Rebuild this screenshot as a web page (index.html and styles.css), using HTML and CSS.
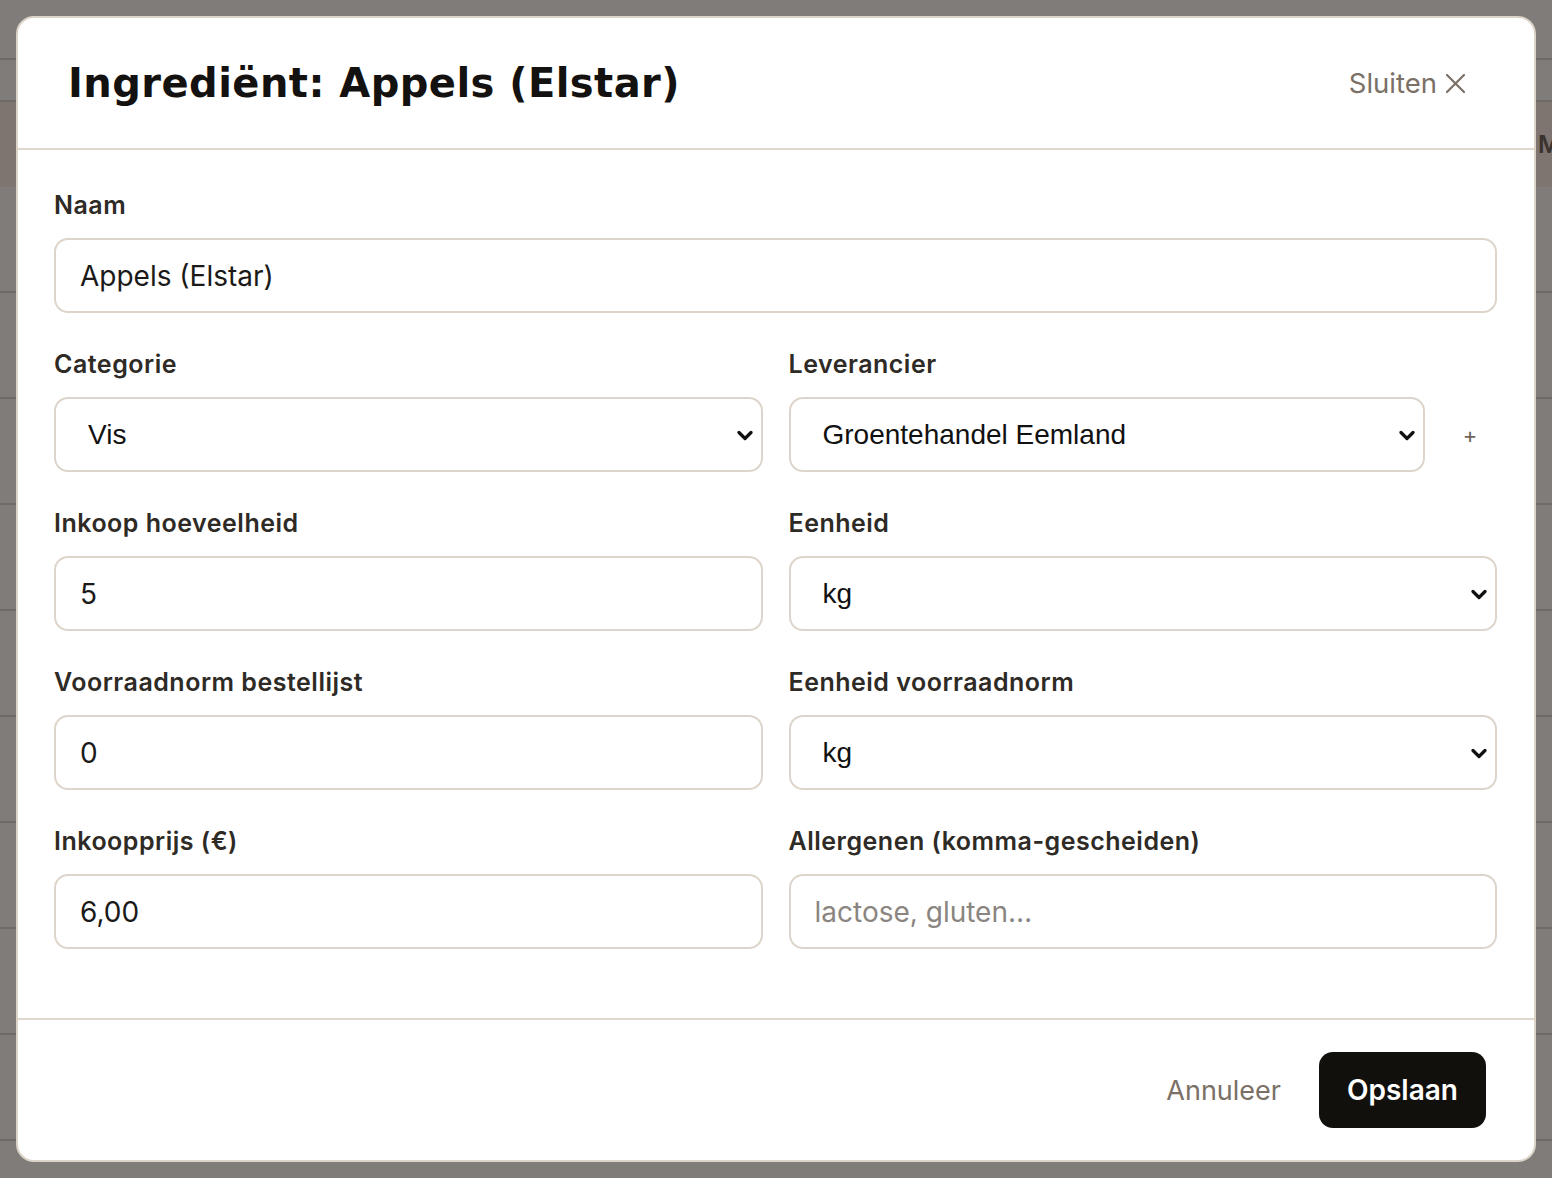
FILE: index.html
```html
<!DOCTYPE html>
<html lang="nl">
<head>
<meta charset="utf-8">
<title>Ingrediënt: Appels (Elstar)</title>
<link rel="stylesheet" href="styles.css">
</head>
<body>
<div class="page">
  <div class="topbar"></div>
  <div class="subbar"></div>
  <div class="thead"><span class="th">M</span></div>
  <div class="trow"></div>
  <div class="trow"></div>
  <div class="trow"></div>
  <div class="trow"></div>
  <div class="trow"></div>
  <div class="trow"></div>
  <div class="trow"></div>
  <div class="trow"></div>
  <div class="trow"></div>
</div>

<div class="modal">
  <header class="modal-header">
    <h1 class="modal-title">Ingrediënt: Appels (Elstar)</h1>
    <button class="close-btn" type="button">Sluiten
      <svg class="close-icon" width="21" height="21" viewBox="0 0 21 21" aria-hidden="true">
        <path d="M2 2 L19 19 M19 2 L2 19" stroke="currentColor" stroke-width="2.2" fill="none" stroke-linecap="round"/>
      </svg>
    </button>
  </header>

  <div class="modal-body">
    <div class="form-grid">
      <div class="field span-2">
        <label class="label">Naam</label>
        <input class="control" type="text" value="Appels (Elstar)">
      </div>

      <div class="field">
        <label class="label">Categorie</label>
        <div class="select-wrap">
          <select class="control select">
            <option>Vis</option>
          </select>
          <svg class="chev" width="16" height="11" viewBox="0 0 16 11" aria-hidden="true"><polyline points="2,2.5 8,8.5 14,2.5" fill="none" stroke="#111" stroke-width="3.2" stroke-linecap="round" stroke-linejoin="round"/></svg>
        </div>
      </div>
      <div class="field">
        <label class="label">Leverancier</label>
        <div class="with-add">
          <div class="select-wrap">
            <select class="control select">
              <option>Groentehandel Eemland</option>
            </select>
            <svg class="chev" width="16" height="11" viewBox="0 0 16 11" aria-hidden="true"><polyline points="2,2.5 8,8.5 14,2.5" fill="none" stroke="#111" stroke-width="3.2" stroke-linecap="round" stroke-linejoin="round"/></svg>
          </div>
          <button class="add-btn" type="button">+</button>
        </div>
      </div>

      <div class="field">
        <label class="label">Inkoop hoeveelheid</label>
        <input class="control" type="text" value="5">
      </div>
      <div class="field">
        <label class="label">Eenheid</label>
        <div class="select-wrap">
          <select class="control select">
            <option>kg</option>
          </select>
          <svg class="chev" width="16" height="11" viewBox="0 0 16 11" aria-hidden="true"><polyline points="2,2.5 8,8.5 14,2.5" fill="none" stroke="#111" stroke-width="3.2" stroke-linecap="round" stroke-linejoin="round"/></svg>
        </div>
      </div>

      <div class="field">
        <label class="label">Voorraadnorm bestellijst</label>
        <input class="control" type="text" value="0">
      </div>
      <div class="field">
        <label class="label">Eenheid voorraadnorm</label>
        <div class="select-wrap">
          <select class="control select">
            <option>kg</option>
          </select>
          <svg class="chev" width="16" height="11" viewBox="0 0 16 11" aria-hidden="true"><polyline points="2,2.5 8,8.5 14,2.5" fill="none" stroke="#111" stroke-width="3.2" stroke-linecap="round" stroke-linejoin="round"/></svg>
        </div>
      </div>

      <div class="field">
        <label class="label">Inkoopprijs (€)</label>
        <input class="control" type="text" value="6,00">
      </div>
      <div class="field">
        <label class="label">Allergenen (komma-gescheiden)</label>
        <input class="control" type="text" placeholder="lactose, gluten…">
      </div>
    </div>
  </div>

  <footer class="modal-footer">
    <button class="btn-cancel" type="button">Annuleer</button>
    <button class="btn-save" type="button">Opslaan</button>
  </footer>
</div>
</body>
</html>
```

FILE: styles.css
```css
* { box-sizing: border-box; }

html, body {
  margin: 0;
  padding: 0;
}

body {
  width: 1552px;
  height: 1178px;
  overflow: hidden;
  background: #807c7a;
  font-family: "Inter", "Noto Sans", sans-serif;
  position: relative;
}

/* Page behind the overlay */
.page {
  display: flex;
  flex-direction: column;
}
.topbar {
  height: 60px;
  border-bottom: 2px solid #6e6a67;
}
.subbar {
  height: 42px;
  border-bottom: 2px solid #6e6a67;
}
.thead {
  height: 85px;
  background: #7e7570;
  display: flex;
  align-items: center;
  justify-content: flex-end;
  padding-right: 0;
}
.th {
  font-size: 24px;
  font-weight: 600;
  color: #3a332e;
  width: 14px;
  overflow: hidden;
  white-space: nowrap;
}
.trow {
  height: 106px;
  border-bottom: 2px solid #6e6a67;
}

/* Modal */
.modal {
  position: absolute;
  left: 16px;
  top: 16px;
  width: 1520px;
  height: 1146px;
  background: #ffffff;
  border: 2px solid #ddd4c9;
  border-radius: 18px;
  display: flex;
  flex-direction: column;
  overflow: hidden;
}

.modal-header {
  height: 132px;
  flex: none;
  border-bottom: 2px solid #e0d8ce;
  display: flex;
  align-items: center;
  justify-content: space-between;
  padding: 0 68px 0 50px;
}

.modal-title {
  margin: 0;
  font-family: "DejaVu Sans", sans-serif;
  font-weight: 700;
  font-size: 40px;
  letter-spacing: 0.45px;
  color: #141210;
}

.close-btn {
  border: 0;
  background: none;
  padding: 0;
  display: flex;
  align-items: center;
  gap: 8px;
  font-family: "Inter", sans-serif;
  font-size: 27.5px;
  color: #7a7066;
  cursor: pointer;
}
.close-icon {
  display: block;
}

.modal-body {
  flex: 1;
  padding: 39px 37px 0 36px;
}

.form-grid {
  display: grid;
  grid-template-columns: 1fr 1fr;
  column-gap: 26px;
  row-gap: 35px;
}

.span-2 {
  grid-column: span 2;
}

.field {
  display: flex;
  flex-direction: column;
  gap: 17px;
}

.label {
  font-family: "Inter", sans-serif;
  font-weight: 600;
  font-size: 25px;
  letter-spacing: 0.5px;
  line-height: 32px;
  color: #2e2a25;
}

.control {
  height: 75px;
  width: 100%;
  border: 2px solid #ddd5cb;
  border-radius: 14px;
  background: #ffffff;
  padding: 0 24px;
  font-family: "Inter", sans-serif;
  font-size: 28px;
  color: #1b1a18;
  outline: none;
}
.control::placeholder {
  color: #8a8580;
}

.select-wrap {
  position: relative;
  display: block;
}
.select {
  appearance: none;
  -webkit-appearance: none;
  font-family: "Liberation Sans", "Arial", sans-serif;
  color: #111111;
  padding: 0 40px 0 32px;
  display: block;
}
.chev {
  position: absolute;
  right: 10px;
  top: 50%;
  margin-top: -5px;
  pointer-events: none;
}

.with-add {
  display: flex;
  align-items: center;
}
.with-add .select-wrap {
  flex: 1;
  min-width: 0;
}
.add-btn {
  width: 72px;
  flex: none;
  border: 0;
  background: none;
  font-family: "Inter", sans-serif;
  font-size: 22px;
  color: #6e655c;
  padding: 0 0 0 18px;
  text-align: center;
}

.modal-footer {
  height: 142px;
  flex: none;
  border-top: 2px solid #e0d8ce;
  display: flex;
  align-items: center;
  justify-content: flex-end;
  gap: 38px;
  padding: 0 48px 0 0;
}

.btn-cancel {
  border: 0;
  background: none;
  padding: 0;
  font-family: "Inter", sans-serif;
  font-size: 27px;
  color: #7a7066;
}

.btn-save {
  height: 76px;
  padding: 0 28px;
  border: 0;
  border-radius: 14px;
  background: #12100d;
  color: #ffffff;
  font-family: "Inter", sans-serif;
  font-weight: 600;
  font-size: 28px;
}
```
